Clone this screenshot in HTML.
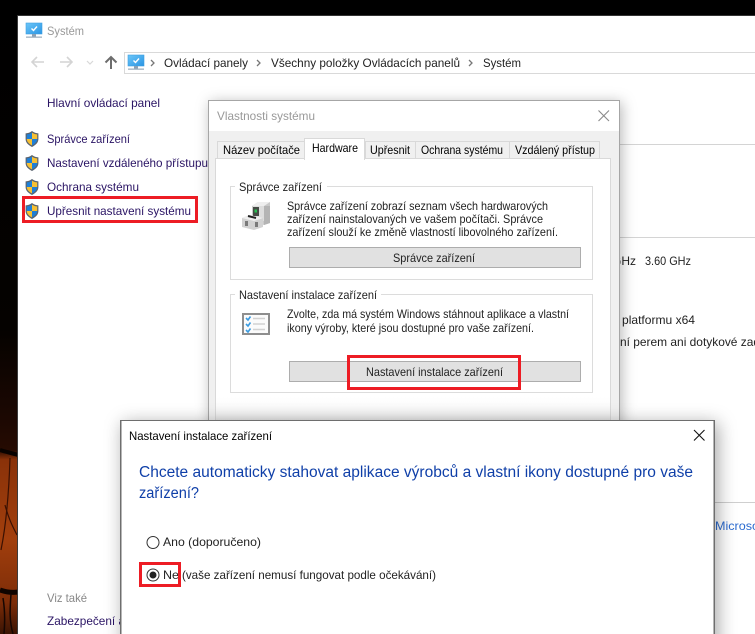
<!DOCTYPE html>
<html lang="cs">
<head>
<meta charset="utf-8">
<title>Systém</title>
<style>
html,body{margin:0;padding:0;background:#000;width:755px;height:634px;overflow:hidden}
svg{display:block}
text{font-family:"Liberation Sans","DejaVu Sans",sans-serif;font-size:12px;fill:#000}
.n{fill:#2a1464}
.g{fill:#999}
.d{fill:#222}
.h{font-size:15.5px;fill:#0f3fa8}
.red{fill:none;stroke:#ed1c24;stroke-width:3}
</style>
</head>
<body>
<svg xmlns="http://www.w3.org/2000/svg" width="755" height="634" viewBox="0 0 755 634">
<defs>
<linearGradient id="bg" x1="0" y1="0" x2="0" y2="1">
<stop offset="0" stop-color="#000"/><stop offset=".52" stop-color="#050200"/><stop offset=".66" stop-color="#1c0802"/><stop offset=".71" stop-color="#260b02"/><stop offset=".725" stop-color="#8a3209"/><stop offset=".85" stop-color="#a23f0d"/><stop offset=".95" stop-color="#7c2c08"/><stop offset="1" stop-color="#3a1404"/>
</linearGradient>
<linearGradient id="scr" x1="0" y1="0" x2="1" y2="1"><stop offset="0" stop-color="#6cc6f8"/><stop offset="1" stop-color="#2a95e4"/></linearGradient>
<linearGradient id="fade" x1="0" y1="0" x2="0" y2="1"><stop offset="0" stop-color="#fff" stop-opacity="0"/><stop offset="1" stop-color="#e8e8e8"/></linearGradient>
<filter id="sh1" x="-15%" y="-15%" width="130%" height="130%"><feDropShadow dx="2" dy="2" stdDeviation="7" flood-color="#000" flood-opacity=".28"/></filter>
<filter id="sh2" x="-10%" y="-20%" width="120%" height="140%"><feDropShadow dx="3" dy="3" stdDeviation="9" flood-color="#000" flood-opacity=".35"/></filter>
<g id="shield">
<path d="M7 0C5 1.600 3 2.200.6 2.400V8c0 3.600 2.600 6 6.400 8 3.800-2 6.400-4.400 6.400-8V2.400C11 2.200 9 1.600 7 0Z" fill="#5a6470"/>
<path d="M7 1.600V8H1.800V3.400C3.800 3.200 5.400 2.700 7 1.600Z" fill="#1f7fd6"/>
<path d="M7 1.600V8h5.200V3.400C10.200 3.200 8.600 2.700 7 1.600Z" fill="#f6c033"/>
<path d="M7 8v6.400C4.200 13 1.800 11 1.800 8Z" fill="#f6c033"/>
<path d="M7 8v6.400C9.800 13 12.200 11 12.200 8Z" fill="#1f7fd6"/>
</g>
<g id="mon">
<rect x="0" y="0" width="16" height="11" fill="url(#scr)" stroke="#3f9fe0" stroke-width=".6"/>
<path d="M5.500 5.500l2 2 3.500-4" fill="none" stroke="#fff" stroke-width="1.400"/>
<rect x="6" y="11" width="4" height="2.500" fill="#8aa0b4"/>
<rect x="0" y="13.500" width="16" height="1.300" fill="#9fb0c0"/>
</g>
<path id="chev" d="M0 0l3 3-3 3" fill="none" stroke="#777" stroke-width="1.300"/>
</defs>

<!-- desktop background -->
<rect width="755" height="634" fill="#000"/>
<rect x="0" y="0" width="18" height="634" fill="url(#bg)"/>
<g fill="none" stroke="#3a1002" stroke-width="1.200">
<path d="M10 458C9 490 7 520 1 550"/>
<path d="M5 505c4 15 8 22 12 30"/>
<path d="M0 590c6 2 12 3 18 2" stroke-width="5" stroke="#100400"/>
<path d="M3 598c2 12 2 24 1 36M11 594c-1 14-2 26 2 40" stroke="#160602" stroke-width="1.500"/>
<path d="M0 450c6 2 12 3 18 5" stroke="#080200" stroke-width="4"/>
</g>
<rect x="17" y="16" width="1" height="618" fill="#3c3c3c"/>

<!-- main window -->
<rect x="18" y="16" width="737" height="618" fill="#fff"/>
<rect x="17" y="15" width="738" height="1" fill="#333"/>
<use href="#mon" x="26" y="23"/>
<text x="47" y="35" class="g" textLength="37" lengthAdjust="spacingAndGlyphs">Systém</text>

<!-- nav -->
<g fill="none" stroke-width="1.600">
<path d="M44 62H32M37 57l-5 5 5 5" stroke="#d4d4d4"/>
<path d="M60 62h12M67 57l5 5-5 5" stroke="#d4d4d4"/>
<path d="M87 61l3 3 3-3" stroke="#d8d8d8" stroke-width="1.200"/>
<path d="M111 69V57M105.500 62.500l5.500-5.500 5.500 5.500" stroke="#6d6d6d" stroke-width="2"/>
</g>
<rect x="124.500" y="52.500" width="640" height="21" fill="#fff" stroke="#d9d9d9"/>
<use href="#mon" x="128" y="55"/>
<use href="#chev" x="151" y="60"/>
<text x="164" y="67" class="d" textLength="84" lengthAdjust="spacingAndGlyphs">Ovládací panely</text>
<use href="#chev" x="257" y="60"/>
<text x="271" y="67" class="d" textLength="189" lengthAdjust="spacingAndGlyphs">Všechny položky Ovládacích panelů</text>
<use href="#chev" x="469" y="60"/>
<text x="483" y="67" class="d" textLength="38" lengthAdjust="spacingAndGlyphs">Systém</text>

<!-- left links -->
<text x="47" y="107" class="n" textLength="113" lengthAdjust="spacingAndGlyphs">Hlavní ovládací panel</text>
<use href="#shield" x="25" y="131"/>
<text x="47" y="143" class="n" textLength="83" lengthAdjust="spacingAndGlyphs">Správce zařízení</text>
<use href="#shield" x="25" y="155"/>
<text x="47" y="167" class="n" textLength="161" lengthAdjust="spacingAndGlyphs">Nastavení vzdáleného přístupu</text>
<use href="#shield" x="25" y="179"/>
<text x="47" y="191" class="n" textLength="92" lengthAdjust="spacingAndGlyphs">Ochrana systému</text>
<use href="#shield" x="25" y="203"/>
<text x="47" y="215" class="n" textLength="144" lengthAdjust="spacingAndGlyphs">Upřesnit nastavení systému</text>
<rect x="23.500" y="197.500" width="173" height="24" class="red"/>

<text x="47" y="602" style="fill:#888" textLength="40" lengthAdjust="spacingAndGlyphs">Viz také</text>
<text x="47" y="625" class="n" textLength="78" lengthAdjust="spacingAndGlyphs">Zabezpečení a</text>

<!-- right content behind dialogs -->
<rect x="600" y="144" width="155" height="1" fill="#d4d4d4"/>
<rect x="600" y="237" width="155" height="1" fill="#d4d4d4"/>
<text x="612" y="265" class="d" textLength="24" lengthAdjust="spacingAndGlyphs">GHz</text>
<text x="645" y="265" class="d" textLength="46" lengthAdjust="spacingAndGlyphs">3.60 GHz</text>
<text x="622" y="324" class="d" textLength="73" lengthAdjust="spacingAndGlyphs">platformu x64</text>
<text x="620" y="346" class="d" textLength="140" lengthAdjust="spacingAndGlyphs">ní perem ani dotykové zad</text>
<rect x="700" y="502" width="55" height="1" fill="#cfcfcf"/>
<text x="715" y="530" style="fill:#2b6bd0" textLength="44" lengthAdjust="spacingAndGlyphs">Microso</text>

<!-- System properties dialog -->
<g filter="url(#sh1)">
<rect x="208.500" y="100.500" width="411" height="400" fill="#f0f0f0" stroke="#a6a6a6"/>
</g>
<rect x="209" y="101" width="410" height="30" fill="#fff"/>
<text x="217" y="120" class="g" textLength="98" lengthAdjust="spacingAndGlyphs">Vlastnosti systému</text>
<path d="M598.500 110.500l10.500 10.500M609 110.500l-10.500 10.500" stroke="#8a8a8a" stroke-width="1.100" fill="none"/>

<!-- tabs -->
<g fill="#f0f0f0" stroke="#d9d9d9">
<rect x="217.500" y="141.500" width="87" height="20"/>
<rect x="365.500" y="141.500" width="50" height="20"/>
<rect x="415.500" y="141.500" width="94" height="20"/>
<rect x="509.500" y="141.500" width="90" height="20"/>
</g>
<rect x="215.500" y="158.500" width="395" height="300" fill="#fff" stroke="#d9d9d9"/>
<rect x="304.500" y="138.500" width="60" height="21" fill="#fff" stroke="#d9d9d9"/>
<rect x="305" y="157" width="59" height="3" fill="#fff"/>
<text x="223" y="154" textLength="77" lengthAdjust="spacingAndGlyphs">Název počítače</text>
<text x="312" y="152" textLength="46" lengthAdjust="spacingAndGlyphs">Hardware</text>
<text x="370" y="154" textLength="40" lengthAdjust="spacingAndGlyphs">Upřesnit</text>
<text x="421" y="154" textLength="82" lengthAdjust="spacingAndGlyphs">Ochrana systému</text>
<text x="515" y="154" textLength="80" lengthAdjust="spacingAndGlyphs">Vzdálený přístup</text>
<rect x="216" y="395" width="394" height="25" fill="url(#fade)"/>

<!-- group 1 -->
<rect x="230.500" y="186.500" width="362" height="93" fill="none" stroke="#dcdcdc"/>
<rect x="235" y="183" width="92" height="8" fill="#fff"/>
<text x="239" y="191" class="d" textLength="83" lengthAdjust="spacingAndGlyphs">Správce zařízení</text>
<g>
<path d="M252 206l6-4h12v21l-6 2-12-3z" fill="#c9c9c9"/>
<path d="M252 206l6-4h12l-6 4z" fill="#eeeeee"/>
<path d="M264 206h6v17l-6 2z" fill="#b4b4b4"/>
<path d="M253 206h11v15h-11z" fill="#dddddd"/>
<rect x="253" y="207" width="6" height="9" fill="#454b45"/>
<rect x="254.500" y="209.500" width="2.500" height="3" fill="#26c050"/>
<path d="M242 218l7-3 14 3v9l-9 3-12-3z" fill="#d2d2d2"/>
<path d="M242 218l7-3 14 3-9 3z" fill="#efefef"/>
<path d="M245 221h3v5h-3zM255 222h3v5h-3z" fill="#7a7a7a"/>
<path d="M248 216l8 2" stroke="#222" stroke-width="2"/>
</g>
<text x="287" y="210" class="d" textLength="261" lengthAdjust="spacingAndGlyphs">Správce zařízení zobrazí seznam všech hardwarových</text>
<text x="287" y="223" class="d" textLength="256" lengthAdjust="spacingAndGlyphs">zařízení nainstalovaných ve vašem počítači. Správce</text>
<text x="287" y="236" class="d" textLength="271" lengthAdjust="spacingAndGlyphs">zařízení slouží ke změně vlastností libovolného zařízení.</text>
<rect x="289.500" y="247.500" width="291" height="20" fill="#e1e1e1" stroke="#adadad"/>
<text x="393" y="262" class="d" textLength="82" lengthAdjust="spacingAndGlyphs">Správce zařízení</text>

<!-- group 2 -->
<rect x="230.500" y="294.500" width="362" height="98" fill="none" stroke="#dcdcdc"/>
<rect x="235" y="290" width="146" height="8" fill="#fff"/>
<text x="239" y="299" class="d" textLength="138" lengthAdjust="spacingAndGlyphs">Nastavení instalace zařízení</text>
<g>
<rect x="243" y="314" width="26" height="20" fill="#fbfbfb" stroke="#8e8e8e" stroke-width="2"/>
<path d="M253 318.500h12M253 324h12M253 329.500h12" stroke="#d2d2d2" stroke-width="1.500"/>
<path d="M246 318l2 2 2.500-3.500M246 324l2 2 2.500-3.500M246 330l2 2 2.500-3.500" stroke="#3a9be0" stroke-width="1.600" fill="none"/>
</g>
<text x="287" y="318" class="d" textLength="282" lengthAdjust="spacingAndGlyphs">Zvolte, zda má systém Windows stáhnout aplikace a vlastní</text>
<text x="287" y="332" class="d" textLength="247" lengthAdjust="spacingAndGlyphs">ikony výroby, které jsou dostupné pro vaše zařízení.</text>
<rect x="289.500" y="361.500" width="291" height="20" fill="#e1e1e1" stroke="#adadad"/>
<text x="366" y="376" class="d" textLength="137" lengthAdjust="spacingAndGlyphs">Nastavení instalace zařízení</text>
<rect x="348.500" y="356.500" width="171" height="32" class="red"/>

<!-- Device installation settings dialog -->
<g filter="url(#sh2)">
<rect x="120.500" y="420.500" width="594" height="240" fill="#fff" stroke="#6e6e6e"/>
</g>
<rect x="120" y="420" width="1.500" height="214" fill="#6e6e6e"/>
<rect x="713.500" y="420" width="1.500" height="214" fill="#6e6e6e"/>
<text x="129" y="440" textLength="143" lengthAdjust="spacingAndGlyphs">Nastavení instalace zařízení</text>
<path d="M694 430l10.500 10.500M704.500 430L694 440.500" stroke="#111" stroke-width="1.100" fill="none"/>
<text x="139" y="477" class="h" textLength="554" lengthAdjust="spacingAndGlyphs">Chcete automaticky stahovat aplikace výrobců a vlastní ikony dostupné pro vaše</text>
<text x="139" y="498" class="h" textLength="60" lengthAdjust="spacingAndGlyphs">zařízení?</text>
<circle cx="153" cy="542.500" r="6" fill="#fff" stroke="#333"/>
<text x="163" y="546" class="d" textLength="98" lengthAdjust="spacingAndGlyphs">Ano (doporučeno)</text>
<circle cx="153" cy="575" r="6" fill="#fff" stroke="#333"/>
<circle cx="153" cy="575" r="3.500" fill="#222"/>
<text x="163" y="579" class="d" textLength="16" lengthAdjust="spacingAndGlyphs">Ne</text>
<text x="182" y="579" class="d" textLength="254" lengthAdjust="spacingAndGlyphs">(vaše zařízení nemusí fungovat podle očekávání)</text>
<rect x="140.500" y="563.500" width="39" height="22" class="red"/>
</svg>
</body>
</html>
